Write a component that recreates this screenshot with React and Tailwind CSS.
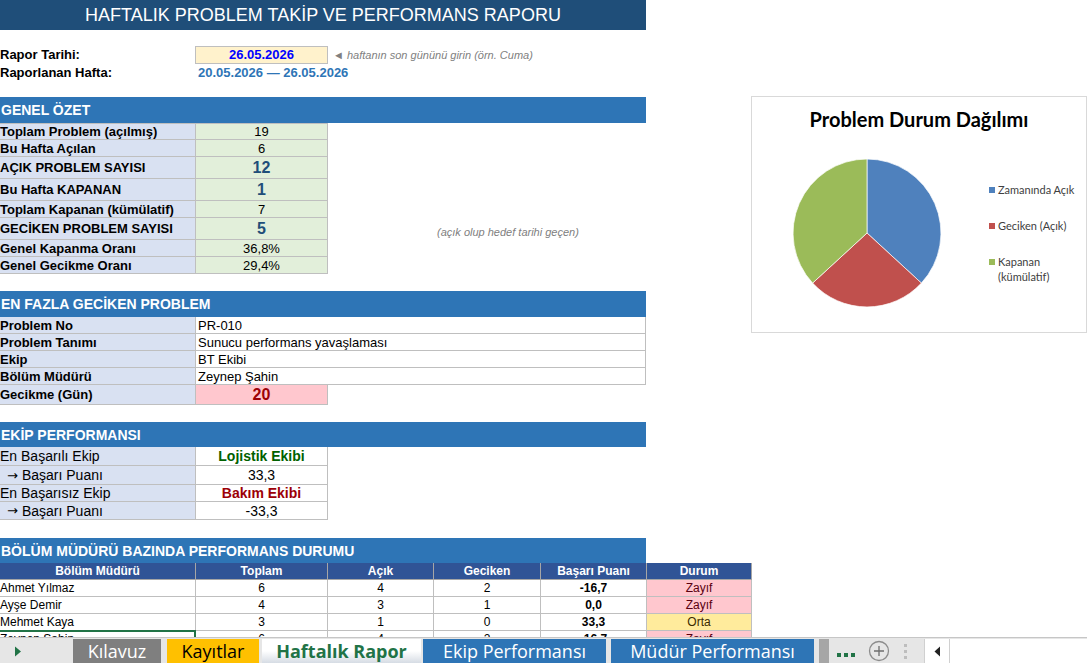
import React from 'react'

// Weekly problem report sheet (Excel-like), with a floating pie chart and the sheet tab strip

const summary = [
    { label: 'Toplam Problem (açılmış)', value: '19', h: 'h-[17px]' },
    { label: 'Bu Hafta Açılan', value: '6', h: 'h-[17px]' },
    { label: 'AÇIK PROBLEM SAYISI', value: '12', h: 'h-[22px]', big: true },
    { label: 'Bu Hafta KAPANAN', value: '1', h: 'h-[22px]', big: true },
    { label: 'Toplam Kapanan (kümülatif)', value: '7', h: 'h-[17px]' },
    { label: 'GECİKEN PROBLEM SAYISI', value: '5', h: 'h-[22px]', big: true, note: '(açık olup hedef tarihi geçen)' },
    { label: 'Genel Kapanma Oranı', value: '36,8%', h: 'h-[17px]' },
    { label: 'Genel Gecikme Oranı', value: '29,4%', h: 'h-[17px]' },
]

const worst = [
    ['Problem No', 'PR-010'],
    ['Problem Tanımı', 'Sunucu performans yavaşlaması'],
    ['Ekip', 'BT Ekibi'],
    ['Bölüm Müdürü', 'Zeynep Şahin'],
]

const managers = [
    { name: 'Ahmet Yılmaz', total: 6, open: 4, late: 2, score: '-16,7', status: 'Zayıf' },
    { name: 'Ayşe Demir', total: 4, open: 3, late: 1, score: '0,0', status: 'Zayıf' },
    { name: 'Mehmet Kaya', total: 3, open: 1, late: 0, score: '33,3', status: 'Orta' },
    { name: 'Zeynep Şahin', total: 6, open: 4, late: 2, score: '-16,7', status: 'Zayıf', active: true },
]

function SectionBar({ children, h = 'h-[25px]' }) {
    return (
        <div className={`${h} w-[646px] bg-[#2E75B6] text-white font-bold text-[14px] leading-none flex items-center pl-[1px]`}>
            {children}
        </div>
    )
}

function Tab({ className, children }) {
    return (
        <div className={`h-full flex items-center justify-center text-[18px] leading-none pb-[1px] ${className}`}>
            {children}
        </div>
    )
}

function TabBar() {
    return (
        <div className="h-[26px] border-t border-[#C6C6C6] bg-[#E6E6E6] pt-[1px] flex items-stretch font-['Open_Sans',sans-serif]">
            <div className="w-[73px] flex items-center pl-[14px]">
                <svg width="8" height="11" viewBox="0 0 8 11">
                    <path d="M1 0.5 L7 5.5 L1 10.5 Z" fill="#217346" />
                </svg>
            </div>
            <Tab className="w-[88px] bg-[#7F7F7F] text-white">Kılavuz</Tab>
            <Tab className="w-[92px] ml-[6px] bg-[#FFC000] text-black">Kayıtlar</Tab>
            <Tab className="w-[159px] ml-[3px] bg-linear-to-b from-white via-white to-[#D6DCE4] text-[#217346] font-bold">Haftalık Rapor</Tab>
            <Tab className="w-[183px] ml-[2px] bg-[#2E75B6] text-white">Ekip Performansı</Tab>
            <Tab className="w-[203px] ml-[5px] bg-[#2E75B6] text-white">Müdür Performansı</Tab>
            <div className="w-[10px] ml-[5px] bg-[#A6A6A6]" />
            <div className="ml-[8px] w-[18px] flex items-end gap-[3px] pb-[6px]">
                <span className="w-[4px] h-[4px] bg-[#217346]" />
                <span className="w-[4px] h-[4px] bg-[#217346]" />
                <span className="w-[4px] h-[4px] bg-[#217346]" />
            </div>
            <div className="ml-[13px] flex items-center">
                <svg width="22" height="22" viewBox="0 0 22 22">
                    <circle cx="11" cy="11" r="9.5" fill="none" stroke="#8C8C8C" strokeWidth="1.3" />
                    <path d="M11 6 V16 M6 11 H16" stroke="#6E6E6E" strokeWidth="1.3" />
                </svg>
            </div>
            <div className="ml-[12px] w-[6px] flex flex-col items-center justify-center gap-[3px]">
                <span className="w-[3px] h-[3px] bg-[#BDBDBD]" />
                <span className="w-[3px] h-[3px] bg-[#BDBDBD]" />
                <span className="w-[3px] h-[3px] bg-[#BDBDBD]" />
            </div>
            <div className="ml-[16px] flex-1 bg-white border-l border-[#D0D0D0] flex items-center">
                <div className="w-[25px] h-full flex items-center justify-center border-r border-[#D0D0D0]">
                    <svg width="7" height="11" viewBox="0 0 7 11">
                        <path d="M6 0.5 L0.5 5.5 L6 10.5 Z" fill="#222" />
                    </svg>
                </div>
            </div>
        </div>
    )
}

function Chart() {
    // 7 on time, 5 late, 7 closed  ->  132.6deg / 94.7deg / 132.6deg
    return (
        <div className="absolute left-[751px] top-[96px] w-[336px] h-[237px] border border-[#D9D9D9] bg-white flex flex-col font-['Lato',sans-serif]">
            <div className="h-[61px] pt-[10px] text-center text-[20px] font-bold text-black leading-[24px]">
                Problem Durum Dağılımı
            </div>
            <div className="flex">
                <svg width="150" height="150" viewBox="0 0 150 150" className="ml-[40px]">
                    <path d="M75 75 L75 1 A74 74 0 0 1 129.4 125.1 Z" fill="#4F81BD" stroke="#fff" strokeWidth="0.7" />
                    <path d="M75 75 L129.4 125.1 A74 74 0 0 1 20.6 125.1 Z" fill="#C0504D" stroke="#fff" strokeWidth="0.7" />
                    <path d="M75 75 L20.6 125.1 A74 74 0 0 1 75 1 Z" fill="#9BBB59" stroke="#fff" strokeWidth="0.7" />
                </svg>
                <div className="ml-[47px] pt-[24px] flex flex-col gap-[21px] text-[11px] leading-[15px] text-[#404040]">
                    <div className="flex items-start gap-[3px]">
                        <span className="mt-[5px] w-[6px] h-[6px] bg-[#4F81BD]" />
                        <span>Zamanında Açık</span>
                    </div>
                    <div className="flex items-start gap-[3px]">
                        <span className="mt-[5px] w-[6px] h-[6px] bg-[#C0504D]" />
                        <span>Geciken (Açık)</span>
                    </div>
                    <div className="flex items-start gap-[3px]">
                        <span className="mt-[5px] w-[6px] h-[6px] bg-[#9BBB59]" />
                        <span>Kapanan<br />(kümülatif)</span>
                    </div>
                </div>
            </div>
        </div>
    )
}

export default function App() {
    return (
        <div className="relative w-[1087px] h-[664px] overflow-hidden bg-white text-black font-['Liberation_Sans',Arial,sans-serif]">
            <div className="h-[637px] overflow-hidden">
                <div className="w-[646px] h-[30px] bg-[#1F4E79] text-white text-[18px] flex items-center justify-center">
                    HAFTALIK PROBLEM TAKİP VE PERFORMANS RAPORU
                </div>

                {/* report date */}
                <div className="mt-[16px] h-[18px] flex items-center text-[13px]">
                    <div className="w-[195px] font-bold">Rapor Tarihi:</div>
                    <div className="w-[133px] h-[18px] bg-[#FFF2CC] border border-[#BFBFBF] flex items-center justify-center font-bold text-[#0000FF]">
                        26.05.2026
                    </div>
                    <div className="ml-[5px] text-[11px] italic text-[#808080]">◄ haftanın son gününü girin (örn. Cuma)</div>
                </div>
                <div className="h-[17px] flex items-center text-[13px]">
                    <div className="w-[195px] font-bold">Raporlanan Hafta:</div>
                    <div className="pl-[3px] font-bold text-[#2E75B6]">20.05.2026 — 26.05.2026</div>
                </div>

                {/* summary */}
                <div className="mt-[16px]">
                    <SectionBar h="h-[26px]">GENEL ÖZET</SectionBar>
                </div>
                <div className="text-[13px]">
                    {summary.map((r, i) => (
                        <div key={r.label} className={`${r.h} flex`}>
                            <div className={`w-[196px] bg-[#D9E1F2] border-r border-b border-[#BFBFBF] ${i === 0 ? 'border-t' : ''} font-bold flex items-center leading-none`}>
                                {r.label}
                            </div>
                            <div className={`w-[132px] bg-[#E2EFDA] border-r border-b border-[#BFBFBF] ${i === 0 ? 'border-t' : ''} flex items-center justify-center leading-none ${r.big ? 'text-[16px] font-bold text-[#1F4E79]' : ''}`}>
                                {r.value}
                            </div>
                            {r.note && (
                                <div className="ml-[109px] flex items-end pb-[2px] text-[11px] italic text-[#808080] leading-none">{r.note}</div>
                            )}
                        </div>
                    ))}
                </div>

                {/* most delayed problem */}
                <div className="mt-[17px]">
                    <SectionBar h="h-[26px]">EN FAZLA GECİKEN PROBLEM</SectionBar>
                </div>
                <div className="text-[13px]">
                    {worst.map(([k, v]) => (
                        <div key={k} className="h-[17px] flex">
                            <div className="w-[196px] bg-[#D9E1F2] border-r border-b border-[#BFBFBF] font-bold flex items-center leading-none">{k}</div>
                            <div className="w-[450px] border-r border-b border-[#BFBFBF] pl-[2px] flex items-center leading-none">{v}</div>
                        </div>
                    ))}
                    <div className="h-[20px] flex">
                        <div className="w-[196px] bg-[#D9E1F2] border-r border-b border-[#BFBFBF] font-bold flex items-center leading-none">Gecikme (Gün)</div>
                        <div className="w-[132px] bg-[#FFC7CE] border-r border-b border-[#BFBFBF] flex items-center justify-center text-[16px] font-bold text-[#9C0006] leading-none">20</div>
                    </div>
                </div>

                {/* team performance */}
                <div className="mt-[17px]">
                    <SectionBar>EKİP PERFORMANSI</SectionBar>
                </div>
                <div className="text-[14px]">
                    <div className="h-[19px] flex">
                        <div className="w-[196px] bg-[#D9E1F2] border-r border-b border-[#BFBFBF] flex items-center leading-none">En Başarılı Ekip</div>
                        <div className="w-[132px] border-r border-b border-[#BFBFBF] flex items-center justify-center font-bold text-[#006100] leading-none">Lojistik Ekibi</div>
                    </div>
                    <div className="h-[19px] flex">
                        <div className="w-[196px] bg-[#D9E1F2] border-r border-b border-[#BFBFBF] flex items-center leading-none pl-[7px]">
                            <span className="font-['DejaVu_Sans',sans-serif] text-[13px] mr-[4px]">→</span>Başarı Puanı
                        </div>
                        <div className="w-[132px] border-r border-b border-[#BFBFBF] flex items-center justify-center leading-none">33,3</div>
                    </div>
                    <div className="h-[17px] flex">
                        <div className="w-[196px] bg-[#D9E1F2] border-r border-b border-[#BFBFBF] flex items-center leading-none">En Başarısız Ekip</div>
                        <div className="w-[132px] border-r border-b border-[#BFBFBF] flex items-center justify-center font-bold text-[#9C0006] leading-none">Bakım Ekibi</div>
                    </div>
                    <div className="h-[18px] flex">
                        <div className="w-[196px] bg-[#D9E1F2] border-r border-b border-[#BFBFBF] flex items-center leading-none pl-[7px]">
                            <span className="font-['DejaVu_Sans',sans-serif] text-[13px] mr-[4px]">→</span>Başarı Puanı
                        </div>
                        <div className="w-[132px] border-r border-b border-[#BFBFBF] flex items-center justify-center leading-none">-33,3</div>
                    </div>
                </div>

                {/* per manager table */}
                <div className="mt-[18px]">
                    <SectionBar>BÖLÜM MÜDÜRÜ BAZINDA PERFORMANS DURUMU</SectionBar>
                </div>
                <div className="text-[12px] w-[752px]">
                    <div className="h-[17px] grid grid-cols-[196px_132px_106px_107px_106px_105px] bg-[#305496] text-white font-bold leading-none">
                        {['Bölüm Müdürü', 'Toplam', 'Açık', 'Geciken', 'Başarı Puanı', 'Durum'].map(h => (
                            <div key={h} className="border-r border-b border-[#A6A6A6] flex items-center justify-center">{h}</div>
                        ))}
                    </div>
                    {managers.map(m => (
                        <div key={m.name} className="h-[17px] grid grid-cols-[196px_132px_106px_107px_106px_105px] leading-none">
                            <div className="relative border-r border-b border-[#BFBFBF] flex items-center">
                                {m.name}
                                {m.active && <span className="absolute -top-px -left-[2px] -right-px -bottom-px border-2 border-[#217346]" />}
                            </div>
                            <div className="border-r border-b border-[#BFBFBF] flex items-center justify-center">{m.total}</div>
                            <div className="border-r border-b border-[#BFBFBF] flex items-center justify-center">{m.open}</div>
                            <div className="border-r border-b border-[#BFBFBF] flex items-center justify-center">{m.late}</div>
                            <div className="border-r border-b border-[#BFBFBF] flex items-center justify-center font-bold">{m.score}</div>
                            <div className={`border-r border-b border-[#BFBFBF] flex items-center justify-center ${m.status === 'Orta' ? 'bg-[#FFEB9C] text-[#3A2A00]' : 'bg-[#FFC7CE] text-[#5A0010]'}`}>
                                {m.status}
                            </div>
                        </div>
                    ))}
                </div>
            </div>

            <TabBar />
            <Chart />
        </div>
    )
}
